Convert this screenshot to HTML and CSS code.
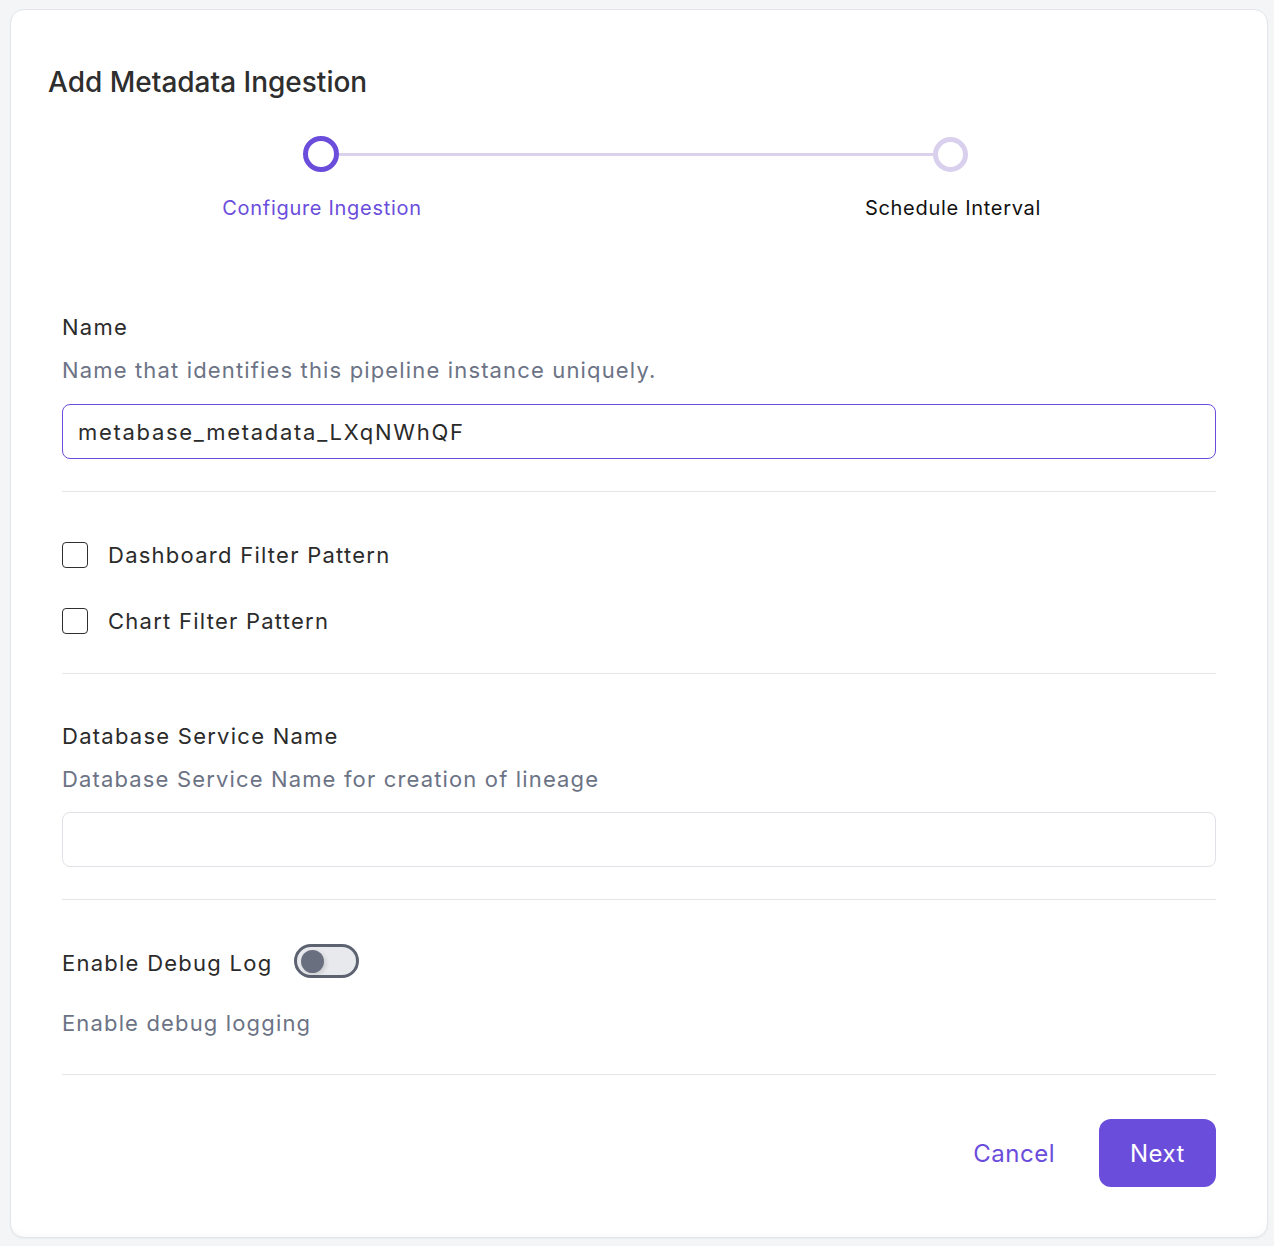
FILE: index.html
```html
<!DOCTYPE html>
<html lang="en">
<head>
<meta charset="utf-8">
<title>Add Metadata Ingestion</title>
<link rel="stylesheet" href="styles.css">
</head>
<body>
<div class="page">
  <div class="card">
    <h1 class="title">Add Metadata Ingestion</h1>

    <div class="stepper">
      <div class="track">
        <span class="dot dot-active"></span>
        <span class="connector"></span>
        <span class="dot dot-idle"></span>
      </div>
      <div class="step-labels">
        <span class="step-label step-label-active">Configure Ingestion</span>
        <span class="step-label">Schedule Interval</span>
      </div>
    </div>

    <form class="form">
      <section class="field">
        <label class="field-label">Name</label>
        <p class="field-desc">Name that identifies this pipeline instance uniquely.</p>
        <div class="input input-focus">metabase_metadata_LXqNWhQF</div>
      </section>

      <hr class="divider divider-1">

      <section class="checks">
        <div class="check-row"><span class="checkbox"></span><span class="check-label">Dashboard Filter Pattern</span></div>
        <div class="check-row"><span class="checkbox"></span><span class="check-label">Chart Filter Pattern</span></div>
      </section>

      <hr class="divider divider-2">

      <section class="field field-db">
        <label class="field-label">Database Service Name</label>
        <p class="field-desc">Database Service Name for creation of lineage</p>
        <div class="input"></div>
      </section>

      <hr class="divider divider-3">

      <section class="debug">
        <div class="debug-row">
          <span class="field-label">Enable Debug Log</span>
          <span class="toggle"><span class="knob"></span></span>
        </div>
        <p class="field-desc debug-desc">Enable debug logging</p>
      </section>

      <hr class="divider divider-4">

      <div class="actions">
        <button type="button" class="btn-link">Cancel</button>
        <button type="button" class="btn-primary">Next</button>
      </div>
    </form>
  </div>
</div>
</body>
</html>
```

FILE: styles.css
```css
* { box-sizing: border-box; }

html, body {
  margin: 0;
  padding: 0;
  background: #f4f5f7;
  font-family: Inter, "Noto Sans", "Liberation Sans", sans-serif;
}

.page {
  padding: 9px 6px 8px 10px;
}

.card {
  background: #ffffff;
  border: 1px solid #e4e5ea;
  border-radius: 14px;
  height: 1229px;
  padding: 0 51px 0 37px;
  box-shadow: 0 -6px 10px -6px rgba(0,0,0,0.04) inset, 0 1px 2px rgba(0,0,0,0.04);
}

.title {
  margin: 55px 0 0 0;
  font-size: 28px;
  line-height: 34px;
  font-weight: 500;
  color: #2e2e2e;
}

/* Stepper */
.stepper {
  margin: 37px 0 0 0;
  padding-left: 255px;
  width: 920px;
}

.track {
  display: flex;
  align-items: center;
  height: 36px;
}

.dot {
  width: 36px;
  height: 36px;
  border-radius: 50%;
  border: 5px solid #6b4ddc;
  flex: none;
}

.dot-idle {
  width: 35px;
  height: 35px;
  border-color: #d9d0ee;
}

.connector {
  flex: 1;
  height: 3px;
  background: #dbd1ec;
}

.step-labels {
  display: flex;
  justify-content: space-between;
  margin: 24px -135px 0 -131px;
}

.step-label {
  width: 300px;
  text-align: center;
  font-size: 20px;
  line-height: 24px;
  letter-spacing: 0.7px;
  color: #111111;
}

.step-label-active {
  color: #6b4ddc;
}

/* Form */
.form {
  margin: 93px 0 0 14px;
}

.field-label {
  display: block;
  font-size: 22px;
  line-height: 28px;
  letter-spacing: 1.25px;
  color: #2b2b2b;
}

.field-desc {
  margin: 15px 0 0 0;
  font-size: 22px;
  line-height: 28px;
  letter-spacing: 1.15px;
  color: #6b7385;
}

.input {
  margin-top: 20px;
  height: 55px;
  border: 1px solid #e1e2e7;
  border-radius: 8px;
  padding: 0 15px;
  display: flex;
  align-items: center;
  font-size: 22px;
  letter-spacing: 1.7px;
  color: #2b2b2b;
}

.input-focus {
  border-color: #6b4ddc;
}

.field-db .input {
  margin-top: 19px;
}

.divider {
  border: none;
  height: 1px;
  background: #e6e6e8;
  margin: 0;
}

.divider-1 { margin-top: 32px; }
.divider-2 { margin-top: 38px; }
.divider-3 { margin-top: 32px; }
.divider-4 { margin-top: 37px; }

.checks {
  margin-top: 49px;
  display: flex;
  flex-direction: column;
  gap: 38px;
}

.check-row {
  display: flex;
  align-items: center;
  height: 28px;
}

.checkbox {
  width: 26px;
  height: 26px;
  border: 1.5px solid #2f2f2f;
  border-radius: 4px;
  flex: none;
}

.check-label {
  margin-left: 20px;
  font-size: 22px;
  line-height: 28px;
  letter-spacing: 1.25px;
  color: #2b2b2b;
}

.field-db {
  margin-top: 48px;
}

.debug {
  margin-top: 44px;
}

.debug-row {
  display: flex;
  align-items: center;
  gap: 22px;
  height: 34px;
}

.debug-row .field-label {
  padding-top: 4px;
}

.toggle {
  width: 65px;
  height: 34px;
  border-radius: 17px;
  border: 3px solid #5d6271;
  background: #e8e9ed;
  display: flex;
  align-items: center;
  padding-left: 4px;
}

.knob {
  width: 23px;
  height: 23px;
  border-radius: 50%;
  background: #6a6f80;
  box-shadow: 2px 2px 4px rgba(0,0,0,0.12);
}

.debug-desc {
  margin-top: 31px;
}

.actions {
  margin-top: 44px;
  display: flex;
  justify-content: flex-end;
  align-items: center;
  gap: 44px;
}

.btn-link {
  background: none;
  border: none;
  padding: 0;
  font-family: inherit;
  font-size: 24px;
  letter-spacing: 0.5px;
  color: #6b4ddc;
  cursor: pointer;
}

.btn-primary {
  width: 117px;
  height: 68px;
  border: none;
  border-radius: 12px;
  background: #6b4ddc;
  color: #ffffff;
  font-family: inherit;
  font-size: 24px;
  letter-spacing: 0.5px;
  cursor: pointer;
}
```
